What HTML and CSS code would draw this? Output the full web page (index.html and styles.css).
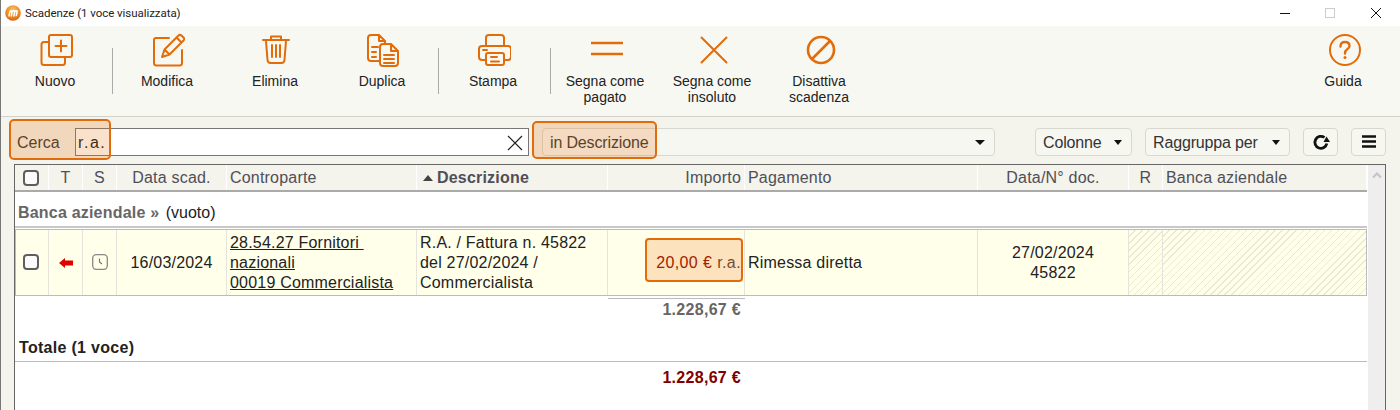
FILE: index.html
```html
<!DOCTYPE html>
<html lang="it">
<head>
<meta charset="utf-8">
<title>Scadenze</title>
<link rel="stylesheet" href="styles.css">
</head>
<body>
<div class="window">
  <header class="titlebar">
    <svg class="logo" viewBox="0 0 16 16" width="16" height="16">
      <defs><radialGradient id="lg" cx="50%" cy="30%" r="75%"><stop offset="0" stop-color="#fbc060"/><stop offset=".7" stop-color="#e8801c"/><stop offset="1" stop-color="#c8560c"/></radialGradient></defs>
      <circle cx="8" cy="8" r="7.800" fill="url(#lg)"/>
      <path d="M3.800 11.500L5 6.500Q6.800 4.800 7.200 6.500L6.200 11.500M7.200 6.500Q9.200 4.800 9.800 6.500L8.800 11.500M9.800 6.500Q11.800 4.800 12.200 6.500L11.200 11" fill="none" stroke="#fff" stroke-width="1.500"/>
    </svg>
    <span class="title">Scadenze (1 voce visualizzata)</span>
    <div class="winctl">
      <svg width="46" height="26" viewBox="0 0 46 26"><path d="M19 13.500H29" stroke="#111" stroke-width="1"/></svg>
      <svg width="46" height="26" viewBox="0 0 46 26"><rect x="18.500" y="8.500" width="9" height="9" fill="none" stroke="#ccc"/></svg>
      <svg width="46" height="26" viewBox="0 0 46 26"><path d="M18 8L28 18M28 8L18 18" stroke="#111" stroke-width="1"/></svg>
    </div>
  </header>

  <nav class="toolbar">
    <button class="tool">
      <svg class="ico" viewBox="0 0 36 36"><rect x="12" y="3" width="23" height="22" rx="2"/><path d="M12 10H7Q4.500 10 4.500 12.500V30.500Q4.500 33 7 33H25.500Q28 33 28 30.500V25M24 8.500V19.500M18.500 14H29.500"/></svg>
      <span>Nuovo</span>
    </button>
    <i class="sep"></i>
    <button class="tool">
      <svg class="ico" viewBox="0 0 36 36"><path d="M20 6H7Q5 6 5 8V31Q5 33.500 7.500 33.500H30.500Q33 33.500 33 31V18"/><path d="M13 25L15.500 17.500L29.500 3.500Q31 2.200 32.500 3.500L34.500 5.500Q36 7 34.500 8.500L20.500 22.500ZM15.500 17.500L20.500 22.500M27.500 5.500L32.500 10.500"/></svg>
      <span>Modifica</span>
    </button>
    <button class="tool">
      <svg class="ico" viewBox="0 0 36 36"><path d="M6 8H32M14 7V4.500H24V7M9 9L10.500 28Q10.800 31 13.500 31H24.500Q27.200 31 27.500 28L29 9M15 13V25M19 13V25M23 13V25"/></svg>
      <span>Elimina</span>
    </button>
    <button class="tool">
      <svg class="ico" viewBox="0 0 36 36"><path d="M15 29H7Q4 29 4 26V6Q4 3 7 3H15L21 9V12M15 3V9H21M8 15H14M8 20H12M8 25H12"/><path d="M16 15Q16 12 19 12H27L34 19V31Q34 34 31 34H19Q16 34 16 31ZM27 12V19H34M20 23H30M20 27H30M20 31H30"/></svg>
      <span>Duplica</span>
    </button>
    <i class="sep"></i>
    <button class="tool">
      <svg class="ico" viewBox="0 0 36 36"><path d="M11 13V6Q11 3 14 3H26Q29 3 29 6V13M11 28H7Q4 28 4 25V17Q4 14 7 14H33Q36 14 36 17V25Q36 28 33 28H29"/><rect x="11" y="21" width="18" height="12" rx="2"/><path d="M8 18H12M16 25H22M16 29.500H24"/></svg>
      <span>Stampa</span>
    </button>
    <i class="sep"></i>
    <button class="tool">
      <svg class="ico ico-line" viewBox="0 0 36 36"><path d="M4 11H36M4 22H36"/></svg>
      <span>Segna come<br>pagato</span>
    </button>
    <button class="tool">
      <svg class="ico" viewBox="0 0 36 36"><path d="M7.500 5.500L32.500 30.500M32.500 5.500L7.500 30.500"/></svg>
      <span>Segna come<br>insoluto</span>
    </button>
    <button class="tool">
      <svg class="ico ico-heavy" viewBox="0 0 36 36"><circle cx="20" cy="18" r="13"/><path d="M11 27L29 9"/></svg>
      <span>Disattiva<br>scadenza</span>
    </button>
    <button class="tool tool-right">
      <svg class="ico" viewBox="0 0 36 36"><circle cx="20" cy="18" r="15"/><path class="qmark" d="M15.500 14.500Q15.500 10 20 10Q24.500 10 24.500 14Q24.500 16 22 17.500Q20 18.800 20 21.500"/><circle class="qdot" cx="20" cy="25.500" r="1.500"/></svg>
      <span>Guida</span>
    </button>
  </nav>

  <section class="searchbar">
    <label class="search-label">Cerca</label>
    <div class="search-input">
      <span class="search-text">r.a.</span>
      <svg width="16" height="16" viewBox="0 0 16 16"><path d="M1 1L15 15M15 1L1 15" stroke="#222" stroke-width="1.200" fill="none"/></svg>
    </div>
    <div class="select select-in">
      <span>in Descrizione</span>
      <b class="caret caret-big"></b>
    </div>
    <div class="select select-col"><span>Colonne</span><b class="caret"></b></div>
    <div class="select select-group"><span>Raggruppa per</span><b class="caret"></b></div>
    <div class="select select-icon">
      <svg width="18" height="18" viewBox="0 0 18 18"><path d="M14.800 10.500A6 6 0 1 1 12.500 4.500" fill="none" stroke="#111" stroke-width="2.800"/><path d="M11.500 9H18L14.500 3.500Z" fill="#111"/></svg>
    </div>
    <div class="select select-icon">
      <svg width="16" height="14" viewBox="0 0 16 14"><path d="M1 1.500H15M1 6.500H15M1 11.500H15" stroke="#111" stroke-width="2.400"/></svg>
    </div>
    <span class="mark mark-cerca"></span>
    <span class="mark mark-in"></span>
  </section>

  <main class="tablebox">
    <div class="tablewrap">
      <div class="row head">
        <div class="cell c"><span class="check"></span></div>
        <div class="cell c">T</div>
        <div class="cell c">S</div>
        <div class="cell c">Data scad.</div>
        <div class="cell">Controparte</div>
        <div class="cell sorted"><i class="tri"></i>Descrizione</div>
        <div class="cell r">Importo</div>
        <div class="cell">Pagamento</div>
        <div class="cell c">Data/N° doc.</div>
        <div class="cell c">R</div>
        <div class="cell">Banca aziendale</div>
      </div>
      <div class="group"><b>Banca aziendale »</b> (vuoto)</div>
      <div class="row data">
        <div class="cell c"><span class="check check-row"></span></div>
        <div class="cell c"><svg width="14" height="10" viewBox="0 0 14 10"><path d="M0 5L6 0V2.500H14V7.500H6V10Z" fill="#e00000"/></svg></div>
        <div class="cell c"><svg class="clock" width="16" height="16" viewBox="0 0 16 16"><rect x=".7" y=".7" width="14.600" height="14.600" rx="3.500" fill="none" stroke="#888" stroke-width="1.300"/><path d="M7.500 4.500V8L10 10" fill="none" stroke="#777" stroke-width="1.200"/></svg></div>
        <div class="cell c">16/03/2024</div>
        <div class="cell"><u>28.54.27 Fornitori&nbsp;<br>nazionali<br>00019 Commercialista</u></div>
        <div class="cell">R.A. / Fattura n. 45822 del 27/02/2024 / Commercialista</div>
        <div class="cell amount"><span class="amount-box">20,00 € <em>r.a.</em></span></div>
        <div class="cell">Rimessa diretta</div>
        <div class="cell c">27/02/2024<br>45822</div>
        <div class="cell hatch"></div>
        <div class="cell hatch"></div>
      </div>
      <div class="row sub">
        <div class="subtotal">1.228,67 €</div>
      </div>
      <div class="total-label">Totale (1 voce)</div>
      <div class="row grand">
        <div class="grand-total">1.228,67 €</div>
      </div>
    </div>
    <aside class="scrollbar"><svg width="12" height="8" viewBox="0 0 12 8"><path d="M2 6.500L6 2.500L10 6.500" fill="none" stroke="#c4c4c4" stroke-width="2"/></svg></aside>
  </main>
</div>
</body>
</html>
```
FILE: styles.css
```css
* { box-sizing: border-box; }
html, body { margin: 0; padding: 0; height: 410px; overflow: hidden; }
body { font-family: "Liberation Sans", Arial, sans-serif; color: #222; background: #f4f3ec; }
.window { width: 1400px; height: 410px; display: flex; flex-direction: column; border-left: 1px solid #777; }

.titlebar { height: 26px; flex: none; background: #fff; display: flex; align-items: center; padding-left: 4px; }
.logo { flex: none; }
.title { margin-left: 4px; font-family: Roboto, sans-serif; font-size: 11.500px; letter-spacing: -.05px; color: #222; }
.winctl { margin-left: auto; display: flex; margin-right: 1px; }
.winctl svg { display: block; }

.toolbar { height: 91px; flex: none; background: #f8f8f2; border-bottom: 1px solid #d2d2cc; padding-left: 4px;
  display: grid; grid-template-columns: 107px 5px 108px 107px 106px 5px 107px 5px 107px 107px 100px 1fr 100px; }
.tool { width: 100px; height: 89px; padding: 6px 0 0; border: 0; background: none; display: flex; flex-direction: column; align-items: center; font: 14px/16px "Liberation Sans", Arial, sans-serif; color: #222; }
.tool span { margin-top: 5px; display: block; text-align: center; }
.tool-right { grid-column: 13; margin-left: -7px; }
.ico { width: 36px; height: 36px; flex: none; fill: none; stroke: #e36c0a; stroke-width: 2; stroke-linecap: round; stroke-linejoin: round; }
.ico-line { stroke-width: 2.600; stroke-linecap: butt; }
.ico-heavy { stroke-width: 2.600; }
.qmark { stroke-width: 2.400; }
.qdot { fill: #e36c0a; stroke: none; }
.sep { display: block; width: 1px; height: 46px; margin-top: 22px; background: #aaa; }

.searchbar { position: relative; height: 47px; flex: none; display: flex; align-items: flex-start; padding: 11px 0 0 16px; font-size: 16px; color: #333; }
.search-label { width: 58px; line-height: 29px; }
.search-input { width: 454px; height: 28px; border: 1px solid #777; background: #fff; display: flex; align-items: center; justify-content: space-between; padding: 1px 5px 0 2px; color: #111; }
.search-text { letter-spacing: 1.500px; }
.select { height: 28px; border: 1px solid #d8d8cf; border-radius: 4px; background: #f7f7f1; display: flex; align-items: center; justify-content: space-between; padding: 1px 7px 0; letter-spacing: -.15px; }
.select-in { width: 453px; margin-left: 13px; }
.select-col { width: 97px; margin-left: 40px; }
.select-group { width: 145px; margin-left: 13px; }
.select-icon { width: 35px; margin-left: 13px; justify-content: center; padding: 0; }
.caret { width: 0; height: 0; border: 4.500px solid transparent; border-top: 5px solid #111; border-bottom: 0; margin-right: 2px; }
.caret-big { border-width: 5px 5px 0; border-top-color: #111; }
.mark { position: absolute; border: 2px solid #e36c0a; border-radius: 5px; background: rgba(232, 120, 20, .22); pointer-events: none; }
.mark-cerca { left: 8px; top: 2px; width: 102px; height: 41px; }
.mark-in { left: 531px; top: 4px; width: 125px; height: 38px; }

.tablebox { flex: 1; margin-left: 13px; width: 1372px; border: 1px solid #666; border-bottom: 0; background: #fff; display: flex; min-height: 0; }
.tablewrap { width: 1352px; flex: none; }
.row { display: grid; grid-template-columns: 34px 34px 34px 110px 190px 191px 137px 233px 151px 34px 204px; }
.cell { padding: 0 3px; display: flex; align-items: center; font-size: 16px; letter-spacing: .2px; line-height: 20px; }
.c { justify-content: center; text-align: center; }
.r { justify-content: flex-end; padding-right: 3px; }
.head { height: 27px; background: #f4f3ec; border-bottom: 2px solid #aaa; color: #4f4f58; }
.head .cell { border-right: 1px solid #fff; }
.sorted { font-weight: bold; padding-left: 6px; }
.tri { width: 0; height: 0; border: 5.500px solid transparent; border-bottom: 6px solid #444; border-top: 0; margin-right: 4px; }
.check { width: 16px; height: 16px; border: 2px solid #5e5e5e; border-radius: 4px; background: #fbfbfb; margin-right: 2px; }
.check-row { margin-bottom: 2px; }
.clock { margin-bottom: 1px; }
.group { height: 36px; border-bottom: 2px solid #c8c8c8; padding: 11px 0 0 3px; line-height: 20px; font-size: 16px; color: #222; }
.group b { color: #666; margin-right: 2px; letter-spacing: .2px; }
.data { margin-top: 1px; height: 67px; border: 1px solid #bbb; background: #ffffea; color: #222; grid-template-columns: 33px 34px 34px 110px 190px 191px 137px 233px 151px 34px 203px; }
.data .cell { border-right: 1px solid #e4e4dc; }
.data .cell:last-child { border-right: 0; }
.amount { justify-content: flex-end; padding: 0 1px 6px 0; }
.amount-box { width: 98px; height: 44px; border: 2px solid #e36c0a; border-radius: 4px; background: #fde3bd; color: #a32000; display: flex; align-items: flex-end; justify-content: flex-end; padding: 0 0 7px; white-space: pre; letter-spacing: .4px; }
.amount-box em { font-style: normal; color: #7a4a30; }
.hatch { background: repeating-linear-gradient(135deg, #ffffea 0 4px, #e9e9d4 4px 5px); }
.sub, .grand { display: grid; }
.sub { height: 39px; padding-top: 2px; }
.subtotal { grid-column: 7; border-top: 1px solid #bbb; text-align: right; font-weight: bold; font-size: 16px; letter-spacing: .3px; line-height: 20px; color: #666; padding: 1px 4px 0 0; height: 22px; }
.total-label { height: 27px; padding: 3px 0 0 4px; font-weight: bold; font-size: 16px; letter-spacing: .3px; line-height: 20px; color: #222; border-bottom: 1px solid #bbb; }
.grand-total { grid-column: 7; text-align: right; font-weight: bold; font-size: 16px; letter-spacing: .3px; line-height: 20px; color: #800000; padding: 6px 4px 0 0; }

.scrollbar { width: 17px; flex: none; margin-left: 1px; background: #eee; display: flex; justify-content: center; padding-top: 6px; align-items: flex-start; }
```
